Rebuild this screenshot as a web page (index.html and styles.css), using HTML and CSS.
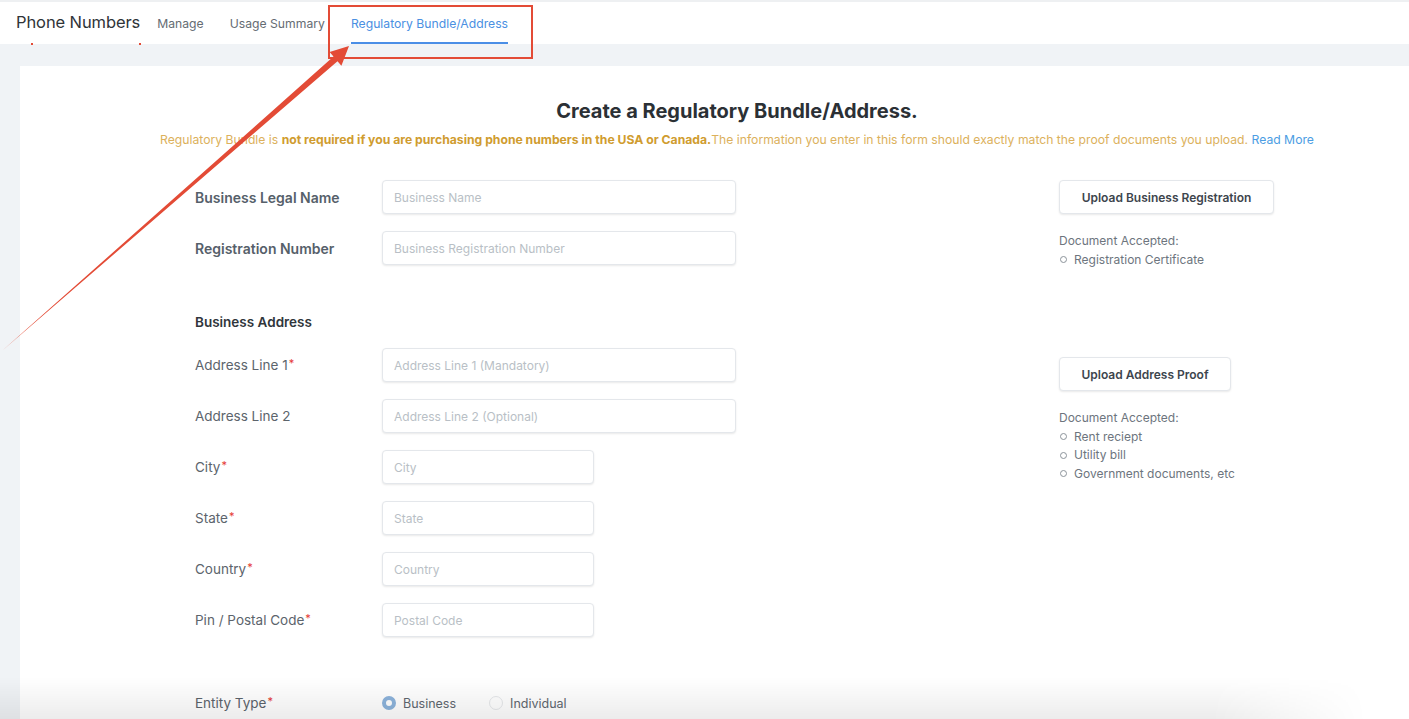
FILE: index.html
```html
<!DOCTYPE html>
<html lang="en">
<head>
<meta charset="utf-8">
<title>Phone Numbers - Regulatory Bundle/Address</title>
<link rel="stylesheet" href="styles.css">
</head>
<body>
<header class="topbar">
  <h1 class="brand">Phone Numbers</h1>
  <nav class="tabs">
    <a class="tab">Manage</a>
    <a class="tab">Usage Summary</a>
    <a class="tab active">Regulatory Bundle/Address</a>
  </nav>
</header>

<main class="panel">
  <h2 class="title">Create a Regulatory Bundle/Address.</h2>
  <p class="notice">Regulatory Bundle is <b>not required if you are purchasing phone numbers in the USA or Canada.</b>The information you enter in this form should exactly match the proof documents you upload. <a class="more">Read More</a></p>

  <div class="form">
    <div class="fields">
      <div class="row"><label class="lbl strong">Business Legal Name</label><input class="inp wide" placeholder="Business Name"></div>
      <div class="row"><label class="lbl strong">Registration Number</label><input class="inp wide" placeholder="Business Registration Number"></div>

      <h3 class="section">Business Address</h3>

      <div class="row"><label class="lbl">Address Line 1<span class="req">*</span></label><input class="inp wide" placeholder="Address Line 1 (Mandatory)"></div>
      <div class="row"><label class="lbl">Address Line 2</label><input class="inp wide" placeholder="Address Line 2 (Optional)"></div>
      <div class="row"><label class="lbl">City<span class="req">*</span></label><input class="inp short" placeholder="City"></div>
      <div class="row"><label class="lbl">State<span class="req">*</span></label><input class="inp short" placeholder="State"></div>
      <div class="row"><label class="lbl">Country<span class="req">*</span></label><input class="inp short" placeholder="Country"></div>
      <div class="row"><label class="lbl">Pin / Postal Code<span class="req">*</span></label><input class="inp short" placeholder="Postal Code"></div>

      <div class="row entity">
        <label class="lbl">Entity Type<span class="req">*</span></label>
        <div class="radios">
          <span class="radio"><span class="dot on"></span>Business</span>
          <span class="radio"><span class="dot"></span>Individual</span>
        </div>
      </div>
    </div>

    <aside class="uploads">
      <button class="btn btn-reg">Upload Business Registration</button>
      <div class="docs">
        <p>Document Accepted:</p>
        <ul>
          <li>Registration Certificate</li>
        </ul>
      </div>
      <button class="btn btn-addr">Upload Address Proof</button>
      <div class="docs">
        <p>Document Accepted:</p>
        <ul>
          <li>Rent reciept</li>
          <li>Utility bill</li>
          <li>Government documents, etc</li>
        </ul>
      </div>
    </aside>
  </div>
</main>

<svg class="annot" width="1409" height="719" viewBox="0 0 1409 719">
  <rect x="329" y="6" width="203" height="52" fill="none" stroke="#e34b36" stroke-width="2"/>
  <polygon points="3,350 333.5,56.6 329.6,52.1 349,46 341.4,65.7 337.5,61.2" fill="#e34b36"/>
  <rect x="31" y="43" width="2" height="2" fill="#e34b36"/>
  <rect x="139" y="43" width="2" height="2" fill="#e34b36"/>
</svg>
<div class="shade"></div>
</body>
</html>
```

FILE: styles.css
```css
* { box-sizing: border-box; }

html, body {
  margin: 0;
  padding: 0;
}

body {
  width: 1409px;
  height: 719px;
  overflow: hidden;
  background: #f0f3f6;
  font-family: Inter, "Noto Sans", "Liberation Sans", sans-serif;
  color: #5b636b;
  position: relative;
}

/* ---------- top bar ---------- */
.topbar {
  height: 44px;
  background: #fff;
  border-top: 2px solid #eef0f2;
  display: flex;
  align-items: stretch;
  padding-left: 16px;
}

.brand {
  margin: 0 17px 0 0;
  font-size: 16.5px;
  font-weight: 400;
  color: #2f3438;
  display: flex;
  align-items: center;
  letter-spacing: -0.1px;
  padding-bottom: 2px;
}

.tabs {
  display: flex;
  gap: 26px;
}

.tab {
  display: flex;
  align-items: center;
  font-size: 12.2px;
  color: #656c73;
  border-bottom: 2px solid transparent;
  padding-top: 3px;
}

.tab.active {
  color: #4a90e2;
  border-bottom-color: #4a8ee6;
}

/* ---------- panel ---------- */
.panel {
  margin: 22px 0 0 20px;
  width: 1434px;
  height: 660px;
  background: #fff;
  padding-top: 33px;
}

.title {
  margin: 0;
  text-align: center;
  font-size: 20px;
  line-height: 24px;
  font-weight: 700;
  color: #2b3035;
}

.notice {
  margin: 9px 0 0;
  text-align: center;
  font-size: 12.2px;
  line-height: 16px;
  color: #dcb15c;
}

.notice b {
  color: #d09c2f;
  font-weight: 700;
}

.more {
  color: #4c9de3;
}

/* ---------- form ---------- */
.form {
  display: flex;
  margin-top: 32px;
  padding-left: 175px;
}

.fields {
  width: 864px;
  display: flex;
  flex-direction: column;
  gap: 17px;
}

.row {
  display: flex;
  align-items: center;
  height: 34px;
}

.lbl {
  width: 187px;
  flex: none;
  font-size: 13.5px;
  color: #5c646c;
}

.lbl.strong {
  font-size: 14px;
  font-weight: 600;
  color: #56606a;
}

.req {
  color: #e53935;
  font-size: 11px;
  vertical-align: top;
  position: relative;
  top: -1px;
  margin-left: 1px;
}

.section {
  margin: 31px 0 0;
  height: 18px;
  line-height: 18px;
  font-size: 13.5px;
  font-weight: 600;
  color: #30363b;
}

.inp {
  height: 34px;
  border: 1px solid #e4e7eb;
  border-radius: 4px;
  box-shadow: 0 1px 2px rgba(0, 0, 0, 0.09);
  padding: 0 11px;
  font-family: inherit;
  font-size: 12px;
  color: #444;
  background: #fff;
  outline: none;
}

.inp::placeholder {
  color: #b9bfc6;
}

.inp.wide { width: 354px; }
.inp.short { width: 212px; }

.entity {
  margin-top: 32px;
}

.radios {
  display: flex;
  gap: 33px;
}

.radio {
  display: flex;
  align-items: center;
  gap: 7px;
  font-size: 12.5px;
  color: #5f676f;
}

.dot {
  width: 14px;
  height: 14px;
  border-radius: 50%;
  border: 1px solid #e6e8eb;
  background: #fff;
}

.dot.on {
  border: 4px solid #8db4dc;
}

/* ---------- uploads ---------- */
.uploads {
  display: flex;
  flex-direction: column;
  align-items: flex-start;
}

.btn {
  height: 34px;
  border: 1px solid #e4e7eb;
  border-radius: 4px;
  background: #fff;
  box-shadow: 0 1px 2px rgba(0, 0, 0, 0.09);
  font-family: inherit;
  font-size: 12px;
  font-weight: 600;
  color: #3d454d;
  padding: 0;
}

.btn-reg { width: 215px; }
.btn-addr { width: 172px; margin-top: 88px; }

.docs {
  margin-top: 18px;
  font-size: 12px;
  line-height: 18.5px;
  color: #6d757e;
}

.docs p { margin: 0; }

.docs ul {
  margin: 0;
  padding: 0;
  list-style: none;
}

.docs li {
  display: flex;
  align-items: center;
}

.docs li::before {
  content: "";
  width: 5px;
  height: 5px;
  border: 1px solid #8c939a;
  border-radius: 50%;
  margin: 0 7px 0 1px;
}

/* ---------- overlays ---------- */
.annot {
  position: absolute;
  top: 0;
  left: 0;
  pointer-events: none;
}

.shade {
  position: absolute;
  left: 0;
  right: 0;
  bottom: 0;
  height: 42px;
  pointer-events: none;
  background: linear-gradient(to bottom, rgba(0, 0, 0, 0), rgba(0, 0, 0, 0.075));
  -webkit-mask-image: linear-gradient(to right, #000 0%, #000 86%, transparent 97%);
  mask-image: linear-gradient(to right, #000 0%, #000 86%, transparent 97%);
}
```
